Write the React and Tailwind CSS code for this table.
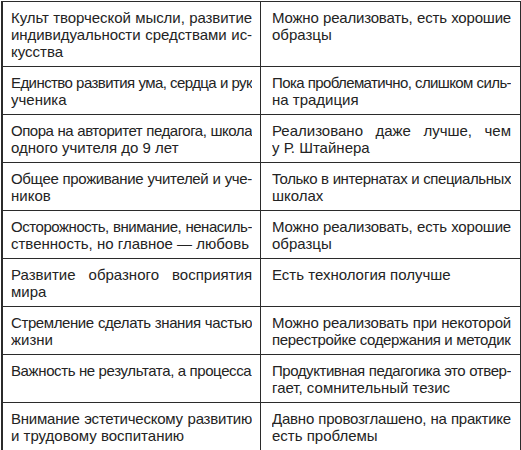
import { useLayoutEffect, useRef, useState } from "react";

const rows = [
  {
    left: ["Культ творческой мысли, развитие", "индивидуальности средствами ис-", "кусства"],
    right: ["Можно реализовать, есть хорошие", "образцы"],
  },
  {
    left: ["Единство развития ума, сердца и рук", "ученика"],
    right: ["Пока проблематично, слишком силь-", "на традиция"],
  },
  {
    left: ["Опора на авторитет педагога, школа", "одного учителя до 9 лет"],
    right: ["Реализовано даже лучше, чем", "у Р. Штайнера"],
  },
  {
    left: ["Общее проживание учителей и уче-", "ников"],
    right: ["Только в интернатах и специальных", "школах"],
  },
  {
    left: ["Осторожность, внимание, ненасиль-", "ственность, но главное — любовь"],
    right: ["Можно реализовать, есть хорошие", "образцы"],
  },
  {
    left: ["Развитие образного восприятия", "мира"],
    right: ["Есть технология получше"],
  },
  {
    left: ["Стремление сделать знания частью", "жизни"],
    right: ["Можно реализовать при некоторой", "перестройке содержания и методик"],
  },
  {
    left: ["Важность не результата, а процесса"],
    right: ["Продуктивная педагогика это отвер-", "гает, сомнительный тезис"],
  },
  {
    left: ["Внимание эстетическому развитию", "и трудовому воспитанию"],
    right: ["Давно провозглашено, на практике", "есть проблемы"],
  },
];

// a typeset line: squeezed when it is too long, stretched when it is not the last
function Line({ text, justify }) {
  const ref = useRef(null);
  const [spacing, setSpacing] = useState(0);

  useLayoutEffect(() => {
    const el = ref.current;
    const over = el.scrollWidth - el.clientWidth;
    if (over > 0) setSpacing(-(over + 1) / text.length);
  }, [text]);

  return (
    <div
      ref={ref}
      className={
        justify
          ? "whitespace-nowrap overflow-hidden text-justify [text-align-last:justify]"
          : "whitespace-nowrap overflow-hidden"
      }
      style={spacing ? { letterSpacing: `${spacing}px` } : undefined}
    >
      {text}
    </div>
  );
}

function Cell({ lines, className }) {
  return (
    <div className={`min-w-0 pt-[7px] pb-[6px] ${className}`}>
      {lines.map((line, i) => (
        <Line key={i} text={line} justify={i < lines.length - 1} />
      ))}
    </div>
  );
}

export default function App() {
  return (
    <div className="bg-white w-[521px] h-[450px] overflow-hidden pt-px pl-px">
      <div
        className="w-[520px] border-t border-l-2 border-r border-[#2b2b2b] text-[15px] leading-[17px] text-[#232323]"
        style={{ fontFamily: '"Liberation Sans", Arial, sans-serif' }}
      >
        {rows.map((row, i) => (
          <div
            key={i}
            className="grid grid-cols-[258px_minmax(0,1fr)] border-b border-[#2b2b2b]"
          >
            <Cell lines={row.left} className="pl-[8px] pr-[8px] border-r border-[#2b2b2b]" />
            <Cell lines={row.right} className="pl-[11px] pr-[9px]" />
          </div>
        ))}
      </div>
    </div>
  );
}
